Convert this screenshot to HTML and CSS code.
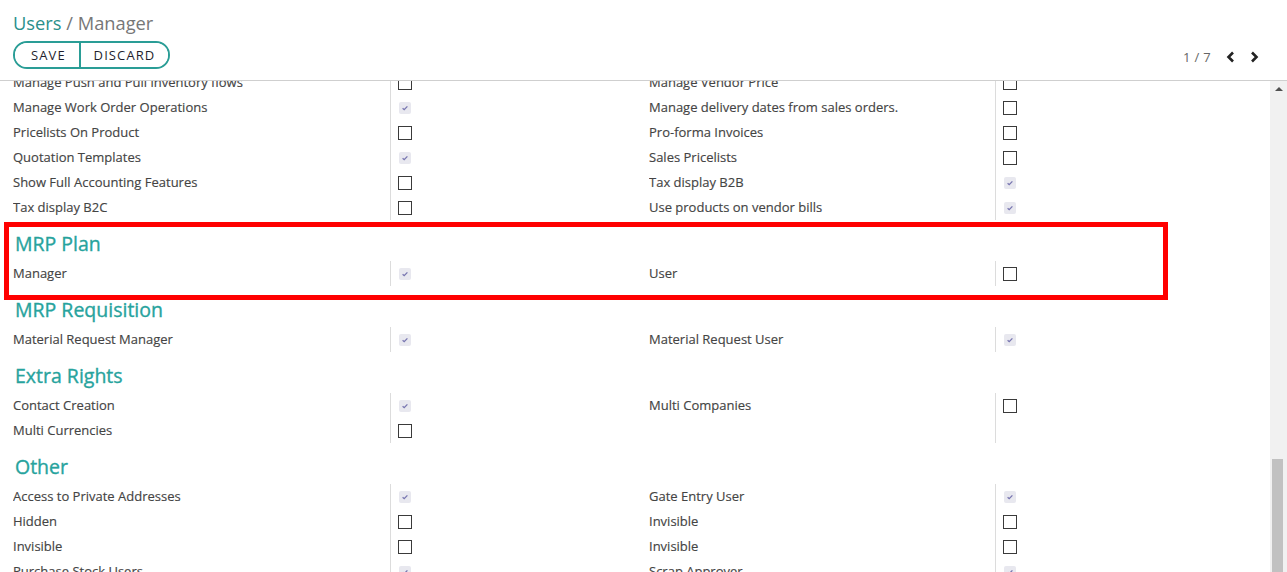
FILE: index.html
```html
<!DOCTYPE html>
<html>
<head>
<meta charset="utf-8">
<link rel="stylesheet" href="styles.css">
</head>
<body>
<div class="page">
  <header class="cp">
    <div class="cp-left">
      <div class="crumbs"><span class="crumb-link">Users</span> <span class="crumb-cur">/ Manager</span></div>
      <div class="btn-group">
        <button class="btn">SAVE</button><button class="btn btn-last">DISCARD</button>
      </div>
    </div>
    <div class="pager">
      <span class="pager-val">1 / 7</span>
      <svg class="chev" width="12" height="14" viewBox="0 0 12 14"><polyline points="8,2.5 3.5,7 8,11.5" fill="none" stroke="#222" stroke-width="2.6"/></svg>
      <svg class="chev" width="12" height="14" viewBox="0 0 12 14"><polyline points="4,2.5 8.5,7 4,11.5" fill="none" stroke="#222" stroke-width="2.6"/></svg>
    </div>
  </header>
  <div class="body-row">
    <main class="scroll">
      <div class="sheet">
        <div class="row"><div class="lbl">Manage Push and Pull inventory flows</div><div class="val"><span class="cb"></span></div><div class="lbl">Manage Vendor Price</div><div class="val"><span class="cb"></span></div></div>
        <div class="row"><div class="lbl">Manage Work Order Operations</div><div class="val"><span class="cb on"><svg viewBox="0 0 12 12"><path d="M3.6 6.3 L5.2 7.7 L8.4 4.4"/></svg></span></div><div class="lbl">Manage delivery dates from sales orders.</div><div class="val"><span class="cb"></span></div></div>
        <div class="row"><div class="lbl">Pricelists On Product</div><div class="val"><span class="cb"></span></div><div class="lbl">Pro-forma Invoices</div><div class="val"><span class="cb"></span></div></div>
        <div class="row"><div class="lbl">Quotation Templates</div><div class="val"><span class="cb on"><svg viewBox="0 0 12 12"><path d="M3.6 6.3 L5.2 7.7 L8.4 4.4"/></svg></span></div><div class="lbl">Sales Pricelists</div><div class="val"><span class="cb"></span></div></div>
        <div class="row"><div class="lbl">Show Full Accounting Features</div><div class="val"><span class="cb"></span></div><div class="lbl">Tax display B2B</div><div class="val"><span class="cb on"><svg viewBox="0 0 12 12"><path d="M3.6 6.3 L5.2 7.7 L8.4 4.4"/></svg></span></div></div>
        <div class="row"><div class="lbl">Tax display B2C</div><div class="val"><span class="cb"></span></div><div class="lbl">Use products on vendor bills</div><div class="val"><span class="cb on"><svg viewBox="0 0 12 12"><path d="M3.6 6.3 L5.2 7.7 L8.4 4.4"/></svg></span></div></div>

        <h2 class="sep">MRP Plan</h2>
        <div class="row"><div class="lbl">Manager</div><div class="val"><span class="cb on"><svg viewBox="0 0 12 12"><path d="M3.6 6.3 L5.2 7.7 L8.4 4.4"/></svg></span></div><div class="lbl">User</div><div class="val"><span class="cb"></span></div></div>

        <h2 class="sep">MRP Requisition</h2>
        <div class="row"><div class="lbl">Material Request Manager</div><div class="val"><span class="cb on"><svg viewBox="0 0 12 12"><path d="M3.6 6.3 L5.2 7.7 L8.4 4.4"/></svg></span></div><div class="lbl">Material Request User</div><div class="val"><span class="cb on"><svg viewBox="0 0 12 12"><path d="M3.6 6.3 L5.2 7.7 L8.4 4.4"/></svg></span></div></div>

        <h2 class="sep">Extra Rights</h2>
        <div class="row"><div class="lbl">Contact Creation</div><div class="val"><span class="cb on"><svg viewBox="0 0 12 12"><path d="M3.6 6.3 L5.2 7.7 L8.4 4.4"/></svg></span></div><div class="lbl">Multi Companies</div><div class="val"><span class="cb"></span></div></div>
        <div class="row"><div class="lbl">Multi Currencies</div><div class="val"><span class="cb"></span></div><div class="lbl"></div><div class="val"></div></div>

        <h2 class="sep">Other</h2>
        <div class="row"><div class="lbl">Access to Private Addresses</div><div class="val"><span class="cb on"><svg viewBox="0 0 12 12"><path d="M3.6 6.3 L5.2 7.7 L8.4 4.4"/></svg></span></div><div class="lbl">Gate Entry User</div><div class="val"><span class="cb on"><svg viewBox="0 0 12 12"><path d="M3.6 6.3 L5.2 7.7 L8.4 4.4"/></svg></span></div></div>
        <div class="row"><div class="lbl">Hidden</div><div class="val"><span class="cb"></span></div><div class="lbl">Invisible</div><div class="val"><span class="cb"></span></div></div>
        <div class="row"><div class="lbl">Invisible</div><div class="val"><span class="cb"></span></div><div class="lbl">Invisible</div><div class="val"><span class="cb"></span></div></div>
        <div class="row"><div class="lbl">Purchase Stock Users</div><div class="val"><span class="cb on"><svg viewBox="0 0 12 12"><path d="M3.6 6.3 L5.2 7.7 L8.4 4.4"/></svg></span></div><div class="lbl">Scrap Approver</div><div class="val"><span class="cb on"><svg viewBox="0 0 12 12"><path d="M3.6 6.3 L5.2 7.7 L8.4 4.4"/></svg></span></div></div>
        <div class="row"><div class="lbl"></div><div class="val"></div><div class="lbl"></div><div class="val"></div></div>
      </div>
      <div class="highlight"></div>
    </main>
    <div class="sbar">
      <div class="sbar-up"></div>
      <div class="sbar-thumb"></div>
    </div>
  </div>
</div>
</body>
</html>
```

FILE: styles.css
```css
* { box-sizing: border-box; }
html, body { margin: 0; padding: 0; }
body {
  font-family: "Open Sans", "Noto Sans", sans-serif;
  font-size: 13px;
  color: #444;
  background: #fff;
  width: 1287px;
  height: 572px;
  overflow: hidden;
}
.page { display: flex; flex-direction: column; height: 572px; }

.cp {
  height: 81px;
  flex: none;
  display: flex;
  justify-content: space-between;
  align-items: flex-end;
  padding: 10px 21px 11px 13px;
  border-bottom: 1px solid #cfcfcf;
}
.crumbs { font-size: 18.3px; line-height: 26px; }
.crumb-link { color: #2a8f8b; }
.crumb-cur { color: #777; }
.btn-group {
  margin-top: 5px;
  display: inline-flex;
  border: 2px solid #2a9d96;
  border-radius: 15px;
  height: 28px;
  overflow: hidden;
}
.btn {
  font-family: "Open Sans", "Noto Sans", sans-serif;
  font-size: 13px;
  letter-spacing: 1.1px;
  color: #1f1f2e;
  background: #fff;
  border: none;
  padding: 0 15px 0 16px;
  height: 24px;
  line-height: 24px;
  width: 64px;
}
.btn-last { border-left: 2px solid #2a9d96; width: 89px; padding: 0; }
.pager { display: flex; align-items: center; height: 24px; gap: 0; }
.pager-val { color: #666; font-size: 13px; margin-right: 9px; letter-spacing: 0.3px; }
.chev { margin-left: 5px; margin-right: 6px; }

.body-row { flex: 1; display: flex; min-height: 0; }
.scroll { flex: 1; position: relative; overflow: hidden; }
.sheet { margin-top: -11px; padding-left: 13px; }

.row {
  display: grid;
  grid-template-columns: 377px 259px 346px 1fr;
  height: 25px;
  line-height: 25px;
}
.lbl { white-space: nowrap; overflow: hidden; -webkit-text-stroke: 0.15px #444; }
.val {
  border-left: 1px solid #dcdcdc;
  padding-left: 7px;
  display: flex;
  align-items: center;
}
.sep {
  margin: 11px 0 4px 2px;
  font-size: 19.5px;
  line-height: 26px;
  font-weight: 500;
  color: #27a39d;
  -webkit-text-stroke: 0.35px #27a39d;
}

.cb {
  display: inline-block;
  width: 14px;
  height: 14px;
  border: 1px solid #3a3a3a;
  margin-top: 1px;
}
.cb.on {
  width: 12px;
  height: 12px;
  border: none;
  border-radius: 2px;
  background: #e8e8ef;
  margin-left: 1px;
}
.cb.on svg { width: 12px; height: 12px; display: block; }
.cb.on path { fill: none; stroke: #7775b0; stroke-width: 1.3; }

.highlight {
  position: absolute;
  left: 4px;
  top: 141px;
  width: 1164px;
  height: 78px;
  border: 5px solid #ff0000;
  pointer-events: none;
}

.sbar { width: 17px; flex: none; background: #f1f1f1; position: relative; }
.sbar-up {
  width: 0; height: 0;
  margin: 6px auto 0;
  border-left: 4px solid transparent;
  border-right: 4px solid transparent;
  border-bottom: 4px solid #505050;
}
.sbar-thumb {
  position: absolute;
  left: 2px;
  top: 378px;
  width: 11px;
  bottom: 0;
  background: #c1c1c1;
}
```
